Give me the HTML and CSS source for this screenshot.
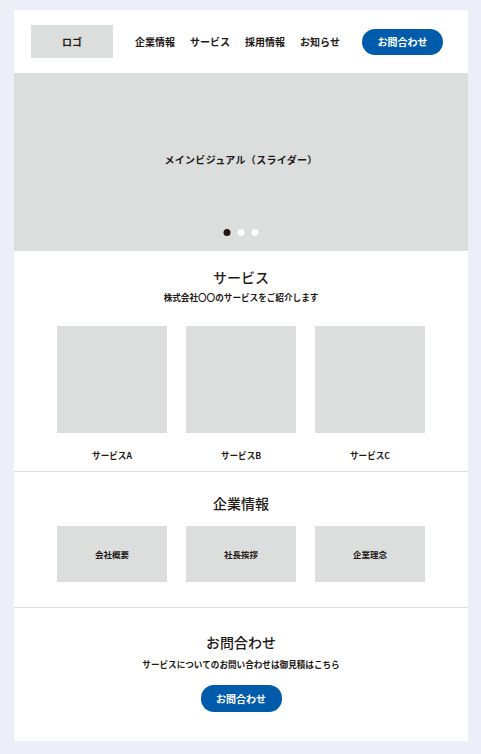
FILE: index.html
```html
<!DOCTYPE html>
<html lang="ja">

<head>
  <meta charset="UTF-8">
  <title>コーポレートサイト ワイヤーフレーム</title>
  <link rel="stylesheet" href="styles.css">
</head>

<body>
  <div class="page">
    <header class="header">
      <div class="logo">ロゴ</div>
      <nav class="nav">
        <a href="#">企業情報</a>
        <a href="#">サービス</a>
        <a href="#">採用情報</a>
        <a href="#">お知らせ</a>
      </nav>
      <a class="btn" href="#">お問合わせ</a>
    </header>

    <div class="hero">
      <p class="heroText">メインビジュアル（スライダー）</p>
      <div class="dots">
        <i class="active"></i>
        <i></i>
        <i></i>
      </div>
    </div>

    <section class="section service">
      <h2 class="title">サービス</h2>
      <p class="lead">株式会社〇〇のサービスをご紹介します</p>
      <ul class="cards">
        <li>
          <div class="thumb"></div>
          <p>サービスA</p>
        </li>
        <li>
          <div class="thumb"></div>
          <p>サービスB</p>
        </li>
        <li>
          <div class="thumb"></div>
          <p>サービスC</p>
        </li>
      </ul>
    </section>

    <section class="section company">
      <h2 class="title">企業情報</h2>
      <ul class="links">
        <li>会社概要</li>
        <li>社長挨拶</li>
        <li>企業理念</li>
      </ul>
    </section>

    <section class="section contact">
      <h2 class="title">お問合わせ</h2>
      <p class="lead">サービスについてのお問い合わせは御見積はこちら</p>
      <a class="btn" href="#">お問合わせ</a>
    </section>
  </div>
</body>

</html>
```

FILE: styles.css
```css
* {
  margin: 0;
  padding: 0;
  box-sizing: border-box;
  list-style: none;
}

body {
  background-color: #eceff8;
  font-family: "Noto Sans CJK JP", "Noto Sans", sans-serif;
  color: #231815;
}

a {
  color: inherit;
  text-decoration: none;
}

.page {
  width: 454px;
  margin: 10px 0 13px 14px;
  background-color: #fff;
}

/* ヘッダー */
.header {
  display: flex;
  align-items: center;
  justify-content: space-between;
  height: 63px;
  padding: 0 25px 0 17px;
}

.logo {
  display: flex;
  align-items: center;
  justify-content: center;
  width: 82px;
  height: 33px;
  background-color: #dcdddd;
  font-size: 10px;
  font-weight: bold;
}

.nav {
  display: flex;
  gap: 15px;
  font-size: 10px;
  font-weight: bold;
}

.btn {
  display: inline-flex;
  align-items: center;
  justify-content: center;
  width: 81px;
  height: 26px;
  border-radius: 13px;
  background-color: #005bab;
  color: #fff;
  font-size: 10px;
  font-weight: bold;
}

/* メインビジュアル */
.hero {
  position: relative;
  display: flex;
  align-items: center;
  justify-content: center;
  height: 178px;
  background-color: #dcdddd;
}

.heroText {
  margin-top: -6px;
  font-size: 10px;
  letter-spacing: 0.3px;
  font-weight: bold;
}

.hero .dots {
  position: absolute;
  bottom: 15px;
  left: 50%;
  display: flex;
  gap: 7px;
  transform: translateX(-50%);
}

.hero .dots i {
  width: 7px;
  height: 7px;
  border-radius: 50%;
  background-color: #fff;
}

.hero .dots i.active {
  background-color: #231815;
}

/* セクション共通 */
.section {
  text-align: center;
  border-bottom: 1px solid #dcdddd;
}

.title {
  font-size: 14px;
  line-height: 18px;
  font-weight: 500;
}

.lead {
  font-size: 8.6px;
  line-height: 12px;
  font-weight: bold;
}

/* サービス */
.service {
  padding: 17px 0 10px;
}

.service .lead {
  margin-top: 5px;
}

.cards {
  display: flex;
  justify-content: center;
  gap: 19px;
  margin-top: 23px;
}

.cards li {
  width: 110px;
}

.cards .thumb {
  height: 107px;
  background-color: #dcdddd;
}

.cards p {
  margin-top: 16px;
  font-size: 8.6px;
  line-height: 12px;
  font-weight: bold;
}

/* 企業情報 */
.company {
  padding: 22px 0 25px;
}

.links {
  display: flex;
  justify-content: center;
  gap: 19px;
  margin-top: 14px;
}

.links li {
  display: flex;
  align-items: center;
  justify-content: center;
  width: 110px;
  height: 56px;
  background-color: #dcdddd;
  font-size: 8.5px;
  font-weight: bold;
}

/* お問合わせ */
.contact {
  padding: 25px 0 29px;
  border-bottom: none;
}

.contact .lead {
  margin-top: 7px;
}

.contact .btn {
  height: 27px;
  margin-top: 15px;
}
```
